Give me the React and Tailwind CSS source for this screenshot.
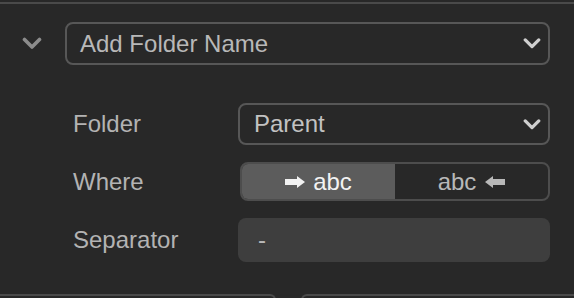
import React from 'react';

const Chevron = ({ className, w = 20, h = 13 }) => (
    <svg width={w} height={h} viewBox="0 0 20 13" className={className} fill="none">
        <path d="M2.5 2.5 L10 10 L17.5 2.5" stroke="currentColor" strokeWidth="3.6" strokeLinecap="round" strokeLinejoin="round" />
    </svg>
);

const Arrow = ({ dir = 'right', className }) => (
    <svg width="20" height="12" viewBox="0 0 20 12" className={className} fill="currentColor">
        {dir === 'right' ? (
            <path d="M0 3 H12 V0 L20 6 L12 12 V9 H0 Z" />
        ) : (
            <path d="M20 3 H8 V0 L0 6 L8 12 V9 H20 Z" />
        )}
    </svg>
);

const Row = ({ label, children, className = '' }) => (
    <div className={`shrink-0 flex items-center pl-[73px] ${className}`}>
        <div className="w-[165px] text-[24px] text-[#b3b3b3] leading-none">{label}</div>
        {children}
    </div>
);

const App = () => {
    return (
        <div className="w-[574px] h-[298px] bg-[#282828] overflow-hidden flex flex-col font-['Liberation_Sans',Arial,sans-serif]">
            <div className="shrink-0 mt-[2px] h-[2px] bg-[#4a4a4a]"></div>

            {/* header */}
            <div className="shrink-0 mt-[18px] h-[43px] flex items-center pl-[22px]">
                <Chevron className="text-[#8c8c8c]" />
                <div className="ml-[23px] w-[485px] h-full flex items-center justify-between border-2 border-[#575757] rounded-lg pl-[13px] pr-[7px]">
                    <span className="text-[24px] text-[#b8b8b8] leading-none">Add Folder Name</span>
                    <Chevron w={18} h={13} className="text-[#cfcfcf]" />
                </div>
            </div>

            <Row label="Folder" className="mt-[38px] h-[42px]">
                <div className="w-[312px] h-full flex items-center justify-between border-2 border-[#575757] rounded-lg pl-[14px] pr-[7px]">
                    <span className="text-[24px] text-[#c2c2c2] leading-none">Parent</span>
                    <Chevron w={18} h={13} className="text-[#cfcfcf]" />
                </div>
            </Row>

            <Row label="Where" className="mt-[17px] h-[39px]">
                <div className="ml-[2px] w-[310px] h-full flex border-2 border-[#4d4d4d] rounded-lg overflow-hidden">
                    <div className="w-[153px] h-full bg-[#5c5c5c] flex items-center justify-center gap-[8px] text-[#f2f2f2]">
                        <Arrow dir="right" />
                        <span className="text-[24px] leading-none">abc</span>
                    </div>
                    <div className="flex-1 h-full flex items-center justify-center gap-[9px] text-[#b8b8b8]">
                        <span className="text-[24px] leading-none">abc</span>
                        <Arrow dir="left" />
                    </div>
                </div>
            </Row>

            <Row label="Separator" className="mt-[17px] h-[44px]">
                <div className="w-[312px] h-full flex items-center bg-[#3e3e3e] rounded-lg pl-[20px]">
                    <span className="text-[24px] text-[#b8b8b8] leading-none">-</span>
                </div>
            </Row>

            <div className="shrink-0 mt-[32px] flex justify-between">
                <div className="w-[276px] h-[20px] border-t-2 border-r-2 border-[#4a4a4a] rounded-tr-md"></div>
                <div className="w-[273px] h-[20px] border-t-2 border-l-2 border-[#4a4a4a] rounded-tl-md"></div>
            </div>
        </div>
    );
};

export default App;
